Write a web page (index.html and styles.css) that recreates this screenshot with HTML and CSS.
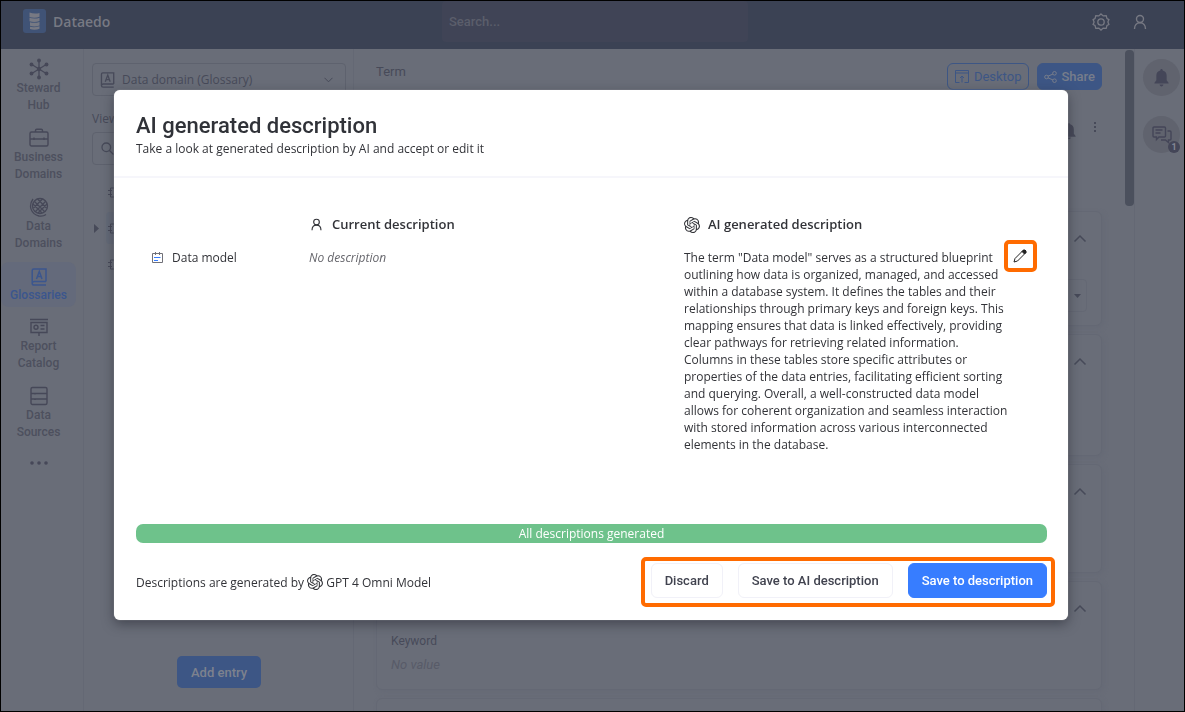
FILE: index.html
```html
<!DOCTYPE html>
<html lang="en">
<head>
<meta charset="utf-8">
<meta name="viewport" content="width=device-width, initial-scale=1">
<title>Dataedo</title>
<link rel="stylesheet" href="styles.css">
</head>
<body>
<svg width="0" height="0" class="defs" aria-hidden="true">
  <symbol id="user" viewBox="0 0 16 16"><g fill="none" stroke="currentColor" stroke-width="1.4"><circle cx="8" cy="5" r="3.500"/><path d="M2.500 15c0-3.600 2.200-6.200 5.500-6.200s5.500 2.600 5.500 6.200"/></g></symbol>
  <symbol id="bell" viewBox="0 0 16 20"><path fill="currentColor" d="M8 1c.8 0 1.300.6 1.300 1.400 2.700.6 4.200 2.700 4.200 5.600v5l2 2.600v.900H.5v-.900l2-2.600V8c0-2.900 1.500-5 4.200-5.600C6.700 1.600 7.200 1 8 1zM6 17.500h4c0 1.200-.9 2-2 2s-2-.8-2-2z"/></symbol>
  <symbol id="book" viewBox="0 0 16 18"><g fill="none" stroke="currentColor" stroke-width="1.500"><path d="M15 13.500H3.200A2 2 0 0 0 1.200 15.200V2.500A1.500 1.500 0 0 1 2.700 1H15v12.500M1.200 15.200c0 1 .8 1.800 1.800 1.800h12M5.500 11 8.300 3.500 11 11M6.500 8.500h3.600"/></g></symbol>
  <symbol id="up" viewBox="0 0 14 9"><path d="M1.500 7.500 7 2l5.500 5.500" fill="none" stroke="currentColor" stroke-width="1.500"/></symbol>
  <symbol id="entry" viewBox="0 0 12 12"><path d="M2.500 2h9v9h-9zM0 4.500h4M0 8.500h4M6 4.500h4M6 7.500h3" fill="none" stroke="currentColor"/></symbol>
  <symbol id="gpt" viewBox="0 0 24 24"><path fill="currentColor" d="M22.2819 9.8211a5.9847 5.9847 0 0 0-.5157-4.9108 6.0462 6.0462 0 0 0-6.5098-2.9A6.0651 6.0651 0 0 0 4.9807 4.1818a5.9847 5.9847 0 0 0-3.9977 2.9 6.0462 6.0462 0 0 0 .7427 7.0966 5.98 5.98 0 0 0 .511 4.9107 6.051 6.051 0 0 0 6.5146 2.9001A5.9847 5.9847 0 0 0 13.2599 24a6.0557 6.0557 0 0 0 5.7718-4.2058 5.9894 5.9894 0 0 0 3.9977-2.9001 6.0557 6.0557 0 0 0-.7475-7.0729zm-9.022 12.6081a4.4755 4.4755 0 0 1-2.8764-1.0408l.1419-.0804 4.7783-2.7582a.7948.7948 0 0 0 .3927-.6813v-6.7369l2.02 1.1686a.071.071 0 0 1 .038.052v5.5826a4.504 4.504 0 0 1-4.4945 4.4944zm-9.6607-4.1254a4.4708 4.4708 0 0 1-.5346-3.0137l.142.0852 4.783 2.7582a.7712.7712 0 0 0 .7806 0l5.8428-3.3685v2.3324a.0804.0804 0 0 1-.0332.0615L9.74 19.9502a4.4992 4.4992 0 0 1-6.1408-1.6464zM2.3408 7.8956a4.485 4.485 0 0 1 2.3655-1.9728V11.6a.7664.7664 0 0 0 .3879.6765l5.8144 3.3543-2.0201 1.1685a.0757.0757 0 0 1-.071 0l-4.8303-2.7865A4.504 4.504 0 0 1 2.3408 7.872zm16.5963 3.8558L13.1038 8.364 15.1192 7.2a.0757.0757 0 0 1 .071 0l4.8303 2.7913a4.4944 4.4944 0 0 1-.6765 8.1042v-5.6772a.79.79 0 0 0-.407-.667zm2.0107-3.0231l-.142-.0852-4.7735-2.7818a.7759.7759 0 0 0-.7854 0L9.409 9.2297V6.8974a.0662.0662 0 0 1 .0284-.0615l4.8303-2.7866a4.4992 4.4992 0 0 1 6.6802 4.66zM8.3065 12.863l-2.02-1.1638a.0804.0804 0 0 1-.038-.0567V6.0742a4.4992 4.4992 0 0 1 7.3757-3.4537l-.142.0805L8.704 5.459a.7948.7948 0 0 0-.3927.6813zm1.0976-2.3654l2.602-1.4998 2.6069 1.4998v2.9994l-2.5974 1.4997-2.6067-1.4997Z"/></symbol>
</svg>

<div class="app">
  <header class="topbar">
    <a class="brand" href="#">
      <svg width="23" height="24" viewBox="0 0 23 24"><rect width="23" height="24" rx="3" fill="#405376"/><path fill="#777983" d="M6.500 3.500c3 1.200 7 1.300 10 .5v3.800c-3 1.200-7 1.200-10 .2zM6.500 8.800c3 1 7 1 10-.1V12c-3 1.300-7 1.300-10 .3zM7 13.300c3 .9 6.500.7 9.500-.4v3.500c-3 1.300-6.500 1.300-9.500.4zM7 17.700c3 .8 6.500.5 9.500-.5v2.500c-3 1.300-7 1.200-9.500.2z"/></svg>
      <span>Dataedo</span>
    </a>
    <input class="search" type="text" placeholder="Search..." aria-label="Search">
    <div class="account">
      <button class="plain" aria-label="Settings"><svg width="18" height="18" viewBox="0 0 18 18" fill="none" stroke="currentColor" stroke-width="1.300"><circle cx="9" cy="9" r="3.200"/><path d="m9 .9 2.200 2 3-.2.800 2.900 1.900 1-1 2.400 1 2.400-1.900 1-.8 2.900-3-.2-2.200 2-2.200-2-3 .2-.8-2.900-1.900-1 1-2.400-1-2.400 1.900-1 .8-2.900 3 .2z"/></svg></button>
      <button class="plain" aria-label="Account"><svg width="16" height="16"><use href="#user"/></svg></button>
    </div>
  </header>

  <div class="workspace">
    <nav class="sidebar">
      <a href="#"><svg width="20" height="22" viewBox="0 0 20 22"><path d="M10 2v18M2 6l16 10M2 16 18 6" stroke="currentColor" stroke-width="1.300"/><g fill="currentColor"><circle cx="10" cy="2.500" r="1.900"/><circle cx="10" cy="19.500" r="1.900"/><circle cx="2.500" cy="6.500" r="1.900"/><circle cx="17.500" cy="6.500" r="1.900"/><circle cx="2.500" cy="15.500" r="1.900"/><circle cx="17.500" cy="15.500" r="1.900"/><circle cx="10" cy="11" r="2.200"/></g></svg>Steward<br>Hub</a>
      <a href="#"><svg width="20" height="22" viewBox="0 0 20 22" fill="none" stroke="currentColor" stroke-width="1.400"><rect x="1" y="5" width="18" height="14" rx="1.500"/><path d="M6.500 5V3.500c0-.8.5-1.300 1.300-1.300h4.400c.8 0 1.300.5 1.300 1.300V5M1 12h18M5 10.500V13M15 10.500V13"/></svg>Business<br>Domains</a>
      <a href="#"><svg width="20" height="22" viewBox="0 0 20 22" fill="none" stroke="currentColor" stroke-width="1.300"><circle cx="11" cy="10" r="7.500"/><path d="m5.500 5.500 10 10M8.500 3l9 9M4 8l9 9M16.500 5.500l-10 10M13.500 3l-9 9M18 8l-9 9M4 3C-1 10 2 18 10 20c3 .5 5 0 7-1.500"/></svg>Data<br>Domains</a>
      <a href="#" class="active"><svg width="16" height="20"><use href="#book"/></svg>Glossaries</a>
      <a href="#"><svg width="20" height="22" viewBox="0 0 20 22" fill="none" stroke="currentColor" stroke-width="1.400"><path d="M1 3.500h18M2 6.500h16v10H2zM10 16.500V20M11.500 9.500h4M11.500 13h4"/><circle cx="7" cy="11.300" r="2"/></svg>Report<br>Catalog</a>
      <a href="#"><svg width="18" height="22" viewBox="0 0 18 22" fill="none" stroke="currentColor" stroke-width="1.400"><rect x="1" y="2.500" width="16" height="17" rx="1.500"/><path d="M1 8.500h16M1 14h16M5 8v1.500M5 13.500V15"/></svg>Data<br>Sources</a>
      <button class="plain more" aria-label="More"><svg width="18" height="4" viewBox="0 0 18 4" fill="currentColor"><circle cx="2" cy="2" r="1.800"/><circle cx="9" cy="2" r="1.800"/><circle cx="16" cy="2" r="1.800"/></svg></button>
    </nav>

    <aside class="tree">
      <button class="picker"><svg width="15" height="16"><use href="#book"/></svg><span>Data domain (Glossary)</span><svg width="9" height="6" viewBox="0 0 9 6"><path d="m.5.8 4 4 4-4" fill="none" stroke="currentColor"/></svg></button>
      <div class="view">View</div>
      <label class="find"><svg width="13" height="13" viewBox="0 0 13 13" fill="none" stroke="currentColor" stroke-width="1.300"><circle cx="5.300" cy="5.300" r="4.300"/><path d="m8.500 8.500 4 4"/></svg><input type="text" aria-label="Find entry"></label>
      <ul class="entries">
        <li><svg width="12" height="12"><use href="#entry"/></svg></li>
        <li class="open"><svg class="caret" width="5" height="9" viewBox="0 0 5 9"><path d="m0 0 5 4.500L0 9z" fill="currentColor"/></svg><span class="picked"><svg width="12" height="12"><use href="#entry"/></svg></span></li>
        <li><svg width="12" height="12"><use href="#entry"/></svg></li>
      </ul>
      <button class="add">Add entry</button>
    </aside>

    <main class="content">
      <div class="crumbs"><span>Term</span>
        <button class="desktop"><svg width="14" height="13" viewBox="0 0 14 13" fill="none" stroke="currentColor"><path d="M4.500 12.500H.5V.5h13v12h-4M.5 3h13M7 12.500V6M5 8l2-2 2 2"/></svg>Desktop</button>
        <button class="share"><svg width="13" height="12" viewBox="0 0 13 12" fill="none" stroke="currentColor"><circle cx="2.500" cy="6" r="1.800"/><circle cx="10.500" cy="2.300" r="1.800"/><circle cx="10.500" cy="9.700" r="1.800"/><path d="m4 5.200 5-2.200M4 6.800 9 9"/></svg>Share</button>
      </div>
      <div class="actions">
        <svg width="14" height="18"><use href="#bell"/></svg>
        <svg width="4" height="10" viewBox="0 0 4 10" fill="currentColor"><path d="M1 0h2v2H1zM1 4h2v2H1zM1 8h2v2H1z"/></svg>
      </div>
      <section class="card first"><svg class="fold" width="14" height="9"><use href="#up"/></svg><div class="combo"><svg width="7" height="4" viewBox="0 0 7 4"><path d="M0 0h7L3.500 4z" fill="currentColor"/></svg></div></section>
      <section class="card second"><svg class="fold" width="14" height="9"><use href="#up"/></svg></section>
      <section class="card"><svg class="fold" width="14" height="9"><use href="#up"/></svg></section>
      <section class="card keyword"><svg class="fold" width="14" height="9"><use href="#up"/></svg><div class="field">Keyword</div><em>No value</em></section>
      <section class="card"></section>
    </main>
    <div class="scroll"><div class="thumb"></div></div>
    <aside class="rail">
      <button class="round" aria-label="Notifications"><svg width="15" height="19"><use href="#bell"/></svg></button>
      <button class="round" aria-label="Comments"><svg width="20" height="18" viewBox="0 0 20 18" fill="none" stroke="currentColor" stroke-width="1.400"><path d="M2 1h10.500a1 1 0 0 1 1 1v8a1 1 0 0 1-1 1H7l-2.500 2.500V11H2a1 1 0 0 1-1-1V2a1 1 0 0 1 1-1zM3.500 4h7M3.500 7h5M15.500 5H18a1 1 0 0 1 1 1v7a1 1 0 0 1-1 1h-1.500v2.500L13.500 14H9"/></svg><span class="badge">1</span></button>
    </aside>
  </div>
</div>

<div class="overlay">
  <div class="dialog" role="dialog" aria-labelledby="dialog-title">
    <header class="dialog-head">
      <h1 id="dialog-title">AI generated description</h1>
      <p>Take a look at generated description by AI and accept or edit it</p>
    </header>
    <div class="dialog-body">
      <table>
        <colgroup><col class="col-name"><col><col class="col-ai"><col class="col-edit"></colgroup>
        <thead><tr>
          <td></td>
          <th><span class="with-icon person"><svg width="13" height="13"><use href="#user"/></svg>Current description</span></th>
          <th colspan="2"><span class="with-icon"><svg width="16" height="16"><use href="#gpt"/></svg>AI generated description</span></th>
        </tr></thead>
        <tbody><tr>
          <td class="name"><span class="with-icon"><svg width="12" height="12" viewBox="0 0 12 12" fill="none"><path d="M.5 1.500h10v9H.5zM3.500 0v3M7.500 0v3" stroke="#707078"/><path d="M2 5.500h6.500M2 8.500h4" stroke="#377dff"/></svg>Data model</span></td>
          <td class="none">No description</td>
          <td>The term "Data model" serves as a structured blueprint<br>outlining how data is organized, managed, and accessed<br>within a database system. It defines the tables and their<br>relationships through primary keys and foreign keys. This<br>mapping ensures that data is linked effectively, providing<br>clear pathways for retrieving related information.<br>Columns in these tables store specific attributes or<br>properties of the data entries, facilitating efficient sorting<br>and querying. Overall, a well-constructed data model<br>allows for coherent organization and seamless interaction<br>with stored information across various interconnected<br>elements in the database.</td>
          <td class="edit-cell"><button class="edit" aria-label="Edit"><svg width="14" height="14" viewBox="0 0 14 14" fill="none" stroke="#222"><path d="m1 13 1-3.500L9.700 1.800a1.500 1.500 0 0 1 2.200 0l.3.300a1.500 1.500 0 0 1 0 2.200L4.500 12z"/><path d="m9 2.500 2.500 2.500 1.500-1.500V2l-1-1h-1.500z" fill="#222"/></svg></button></td>
        </tr></tbody>
      </table>
    </div>
    <div class="progress" role="status">All descriptions generated</div>
    <footer class="dialog-foot">
      <p>Descriptions are generated by <svg width="16" height="16"><use href="#gpt"/></svg> GPT 4 Omni Model</p>
      <div class="choices">
        <button>Discard</button>
        <button>Save to AI description</button>
        <button class="primary">Save to description</button>
      </div>
    </footer>
  </div>
</div>
</body>
</html>
```
FILE: styles.css
```css
* { box-sizing: border-box; }
body {
  margin: 0;
  font: 12px/17px "Open Sans", "Noto Sans", sans-serif;
  color: #323338;
  background: #696d78;
}
button, input { font: inherit; color: inherit; }
button { cursor: pointer; }
a { color: inherit; text-decoration: none; }
.defs { position: absolute; }
.plain { border: 0; padding: 0; background: none; display: flex; }

.app {
  height: 100vh;
  display: flex;
  flex-direction: column;
  overflow: hidden;
  border: 1px solid #000;
  color: #474a59;
  background: #696d78;
}

.topbar {
  display: grid;
  grid-template-columns: 1fr 306px 1fr;
  height: 48px;
  flex: none;
  padding: 0 17px 0 22px;
  align-items: start;
  background: #3b4254;
  color: #777983;
}
.brand { display: flex; gap: 7px; align-items: center; padding-top: 8px; font-size: 14px; font-weight: 600; }
.search {
  width: 100%;
  height: 41px;
  padding: 0 7px;
  border: 0;
  border-radius: 4px;
  background: #404456;
  font: 500 13px Roboto, sans-serif;
}
.search::placeholder { color: #5b5e6b; opacity: 1; }
.account { display: flex; justify-content: flex-end; align-items: center; gap: 22px; height: 41px; padding-right: 19px; }

.workspace { flex: 1; display: flex; min-height: 0; }
.sidebar {
  width: 83px;
  flex: none;
  padding-top: 9px;
  border-right: 1px solid #646874;
  display: flex;
  flex-direction: column;
  font: 500 12px/17px Roboto, sans-serif;
}
.sidebar a {
  display: flex;
  flex-direction: column;
  align-items: center;
  text-align: center;
  width: 75px;
  margin-bottom: 13px;
  color: #4d505e;
}
.sidebar svg { color: #464858; }
.sidebar .active { color: #3b568e; background: #646a7b; border-radius: 8px; padding: 5px 0 3px; margin: -3px 0 9px; }
.sidebar .active svg { color: #3b568e; }
.more { width: 75px; justify-content: center; padding-top: 7px; }

.tree {
  width: 270px;
  flex: none;
  padding: 14px 7px 23px 8px;
  border-right: 1px solid #646874;
  display: flex;
  flex-direction: column;
}
.picker {
  display: flex;
  align-items: center;
  gap: 7px;
  height: 33px;
  padding: 0 12px 0 7px;
  border: 1px solid #5e626e;
  border-radius: 4px;
  background: none;
  text-align: left;
}
.picker span { flex: 1; }
.view { padding: 14px 0 5px; }
.find { display: flex; align-items: center; height: 33px; padding-left: 8px; border: 1px solid #5e626e; border-radius: 4px; }
.find input { width: 200px; border: 0; background: none; }
.entries { list-style: none; margin: 9px 0 0; padding: 0; }
.entries li { height: 36px; display: flex; align-items: center; padding-left: 16px; }
.entries .open { padding-left: 2px; gap: 7px; }
.picked { flex: 1; display: flex; padding: 10px 2px; border-radius: 4px; background: #646a78; }
.add {
  margin: auto auto 0;
  height: 32px;
  padding: 0 14px;
  border: 0;
  border-radius: 5px;
  background: #3d5685;
  color: #7d828e;
  font: 500 13px Roboto, sans-serif;
}

.content { flex: 1; padding: 0 23px 0 22px; display: flex; flex-direction: column; gap: 8px; font-family: Roboto, sans-serif; }
.crumbs { display: flex; align-items: center; gap: 8px; padding-top: 14px; font-size: 13px; }
.crumbs span { flex: 1; padding-bottom: 10px; }
.crumbs button { display: flex; align-items: center; gap: 5px; height: 27px; padding: 0 7px; border: 1px solid #3d5685; border-radius: 6px; background: none; color: #3d5685; }
.crumbs .share { background: #3d5685; color: #777d8b; font-weight: 500; gap: 4px; padding: 0 6px; }
.actions { display: flex; justify-content: flex-end; gap: 17px; margin: 24px 5px 63px 0; align-items: flex-start; }
.card { flex: none; min-height: 109px; padding: 22px 14px 0; border: 1px solid #646874; border-radius: 6px; box-shadow: 2px 2px 4px #666a76; }
.first { min-height: 115px; }
.second { min-height: 122px; }
.fold { display: block; margin-left: auto; }
.combo { display: flex; align-items: center; justify-content: flex-end; height: 33px; margin-top: 36px; padding-right: 5px; border: 1px solid #646874; border-radius: 4px; }
.keyword { font-size: 12px; }
.field { padding: 20px 0 6px; }
.keyword em { color: #585b68; font-size: 13px; }

.scroll { width: 9px; flex: none; padding-top: 1px; }
.thumb { height: 156px; border-radius: 4px; background: #4b505d; }
.rail { width: 50px; flex: none; padding: 10px 4px 0 8px; border-left: 1px solid #646874; display: flex; flex-direction: column; align-items: center; gap: 20px; }
.round { position: relative; width: 37px; height: 37px; padding: 0; border: 0; border-radius: 50%; display: flex; align-items: center; justify-content: center; background: #60636e; color: #444658; }
.badge { position: absolute; right: 0; bottom: 0; width: 12px; height: 12px; border-radius: 50%; background: #444658; color: #858894; font: 700 9px/12px Roboto, sans-serif; }

.overlay { position: fixed; inset: 0; display: flex; padding: 90px 117px 92px 114px; }
.dialog {
  flex: 1;
  display: flex;
  flex-direction: column;
  border-radius: 6px;
  background: #fff;
  box-shadow: 0 0 1px #ccc, 0 4px 12px rgba(30, 32, 42, 0.5);
}
.dialog-head { padding: 22px 22px 19px; border-bottom: 2px solid #f6f6fb; }
.dialog-head h1 { margin: 0; font: 500 22px/28px Roboto, sans-serif; color: #303238; }
.dialog-head p { margin: 0; }
.dialog-body { flex: 1; padding: 30px 21px 0 22px; }
table { width: 100%; table-layout: fixed; border-collapse: collapse; }
.col-name { width: 173px; }
.col-ai { width: 320px; }
.col-edit { width: 43px; }
th, td { padding: 0; text-align: left; vertical-align: top; }
th { height: 41px; padding-top: 8px; font-size: 13px; font-weight: 600; }
tbody td { white-space: nowrap; }
.with-icon { display: flex; align-items: center; gap: 8px; }
.person { gap: 9px; padding-left: 1px; }
.name { padding-left: 16px; }
.none { font-style: italic; color: #66666c; }
.edit { display: flex; align-items: center; justify-content: center; width: 33px; height: 32px; margin-top: -9px; padding: 0; border: 4px solid #ff6b00; border-radius: 5px; background: #fff; }
.progress { margin: 0 21px 0 22px; border-radius: 7px; background: #6ec28b; color: #fff; text-align: center; line-height: 19px; }
.dialog-foot { display: flex; align-items: center; justify-content: space-between; padding: 14px 13px 13px 22px; }
.dialog-foot p { margin: 0; }
.dialog-foot svg { vertical-align: -3px; }
.choices { display: flex; gap: 15px; padding: 2px 4px 5px 6px; border: 4px solid #ff6b00; border-radius: 5px; }
.choices button { height: 35px; padding: 0 13px; border: 1px solid #f1f1f8; border-radius: 6px; background: #fff; color: #41434f; font: 500 13px Roboto, sans-serif; }
.choices .primary { border-color: #377dff; background: #377dff; color: #fff; }
```
